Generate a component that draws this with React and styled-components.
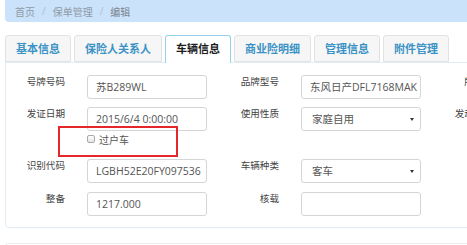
import React from "react";
import styled, { createGlobalStyle } from "styled-components";

const GlobalStyle = createGlobalStyle`
  html, body { margin: 0; padding: 0; background: #fff; }
  body {
    width: 467px; height: 245px; overflow: hidden;
    font-family: "Open Sans", "Noto Sans CJK SC", sans-serif;
    color: #444;
  }
`;

const Page = styled.div`
  position: relative;
  padding-left: 5px;
  width: 600px;
`;

const Breadcrumb = styled.div`
  height: 22px;
  background: #cae2fa;
  border-radius: 0 0 0 4px;
  display: flex;
  align-items: center;
  padding-left: 10px;
  font-size: 10px;
  color: #8e9aa6;
`;

const Crumb = styled.span`
  color: ${(p) => (p.$active ? "#7a838c" : "#8e9aa6")};
`;

const Sep = styled.span`
  color: #aebfd0;
  padding: 0 7px;
`;

const TabBar = styled.div`
  margin-top: 13px;
  display: flex;
  gap: 3px;
  height: 28px;
`;

const Tab = styled.div`
  box-sizing: border-box;
  height: ${(p) => (p.$active ? "28px" : "27px")};
  padding: 0 10px;
  border: 1px solid ${(p) => (p.$active ? "#92d2ed" : "#e2e2e2")};
  border-bottom: ${(p) => (p.$active ? "none" : "1px solid #e2e2e2")};
  border-radius: 3px 3px 0 0;
  background: ${(p) => (p.$active ? "#fff" : "#f6f6f6")};
  color: ${(p) => (p.$active ? "#1d1d1d" : "#3a92c6")};
  font-weight: bold;
  font-size: 11px;
  line-height: 25px;
  white-space: nowrap;
  position: relative;
  z-index: ${(p) => (p.$active ? 1 : 0)};
`;

const Panel = styled.div`
  margin-top: -1px;
  border: 1px solid #e3ebf3;
  border-radius: 0 0 4px 4px;
  padding: 12px 0 11px 0;
`;

const Row = styled.div`
  display: grid;
  grid-template-columns: repeat(3, 214px);
  height: 24px;
  margin-top: ${(p) => p.$mt || 0}px;
`;

const Field = styled.div`
  display: flex;
  align-items: flex-start;
`;

const Label = styled.div`
  width: 59px;
  margin-right: 22px;
  text-align: right;
  font-size: 9.6px;
  line-height: 13px;
  color: #444;
  white-space: nowrap;
`;

const Input = styled.div`
  box-sizing: border-box;
  width: 120px;
  height: 24px;
  border: 1px solid #d5d5d5;
  border-radius: 3px;
  padding-left: ${(p) => (p.$select ? 10 : 8)}px;
  font-size: 10.5px;
  line-height: 22px;
  color: #555;
  white-space: nowrap;
  overflow: hidden;
  position: relative;
  display: flex;
  align-items: center;
`;

const Arrow = styled.span`
  position: absolute;
  right: 6px;
  top: 10px;
  width: 0;
  height: 0;
  border-left: 2px solid transparent;
  border-right: 2px solid transparent;
  border-top: 3px solid #333;
`;

const CheckRow = styled.div`
  margin-top: 1px;
  height: 14px;
  padding-left: 81px;
  display: flex;
  align-items: center;
  gap: 4px;
  font-size: 10px;
  color: #555;
`;

const Box = styled.span`
  box-sizing: border-box;
  width: 8px;
  height: 8px;
  border: 1px solid #a9a9a9;
  border-radius: 2px;
  background: linear-gradient(#fdfdfd, #e6e6e6);
`;

const Highlight = styled.div`
  position: absolute;
  left: 58px;
  top: 126px;
  width: 120px;
  height: 31px;
  box-sizing: border-box;
  border: 2px solid #e5262a;
  pointer-events: none;
`;

const NextPanel = styled.div`
  margin-top: 15px;
  height: 20px;
  border: 1px solid #e9edf1;
  border-bottom: none;
  border-radius: 4px 0 0 0;
`;

const tabs = ["基本信息", "保险人关系人", "车辆信息", "商业险明细", "管理信息", "附件管理"];

function F({ label, value, select }) {
  return (
    <Field>
      <Label>{label}</Label>
      {value !== undefined && (
        <Input $select={select}>
          {value}
          {select && <Arrow />}
        </Input>
      )}
    </Field>
  );
}

export default function App() {
  return (
    <>
      <GlobalStyle />
      <Page>
        <Breadcrumb>
          <Crumb>首页</Crumb>
          <Sep>/</Sep>
          <Crumb>保单管理</Crumb>
          <Sep>/</Sep>
          <Crumb $active>编辑</Crumb>
        </Breadcrumb>
        <TabBar>
          {tabs.map((t, i) => (
            <Tab key={t} $active={i === 2}>{t}</Tab>
          ))}
        </TabBar>
        <Panel>
          <Row>
            <F label="号牌号码" value="苏B289WL" />
            <F label="品牌型号" value="东风日产DFL7168MAK" />
            <F label="所有人" />
          </Row>
          <Row $mt={8}>
            <F label="发证日期" value="2015/6/4 0:00:00" />
            <F label="使用性质" value="家庭自用" select />
            <F label="发动机号" />
          </Row>
          <CheckRow>
            <Box />
            <span>过户车</span>
          </CheckRow>
          <Row $mt={13}>
            <F label="识别代码" value="LGBH52E20FY097536" />
            <F label="车辆种类" value="客车" select />
          </Row>
          <Row $mt={9}>
            <F label="整备" value="1217.000" />
            <F label="核载" value="" />
          </Row>
        </Panel>
        <NextPanel />
        <Highlight />
      </Page>
    </>
  );
}
